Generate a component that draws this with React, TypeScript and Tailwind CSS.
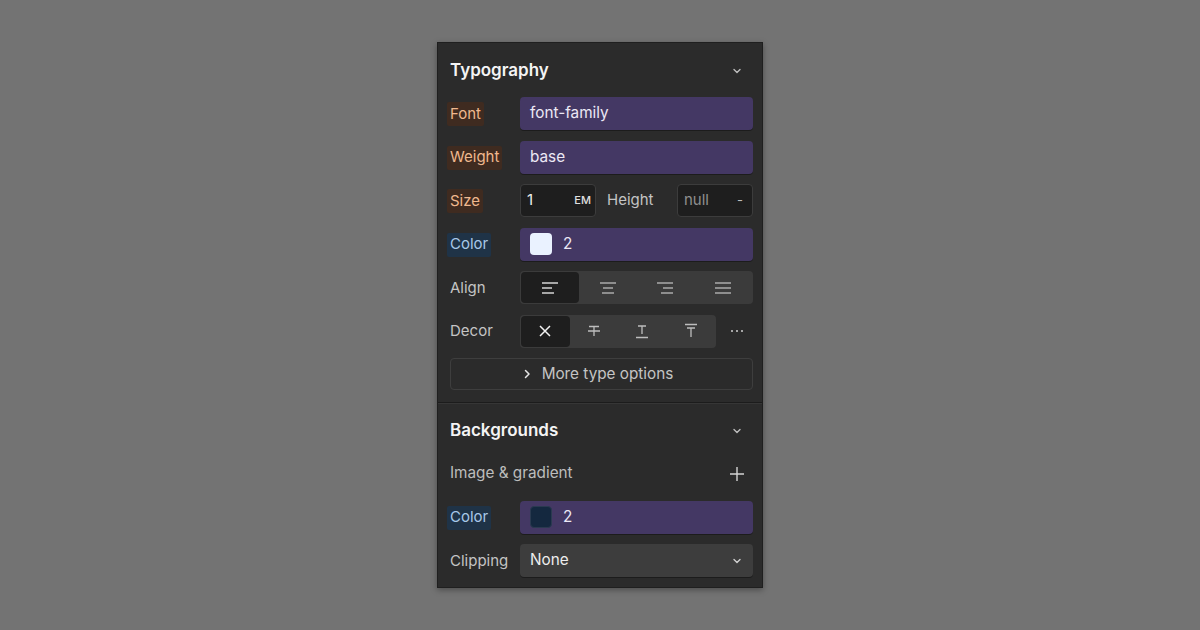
import React from "react";

const font = { fontFamily: "Inter, 'Noto Sans', sans-serif" };

function Chevron({ className = "" }: { className?: string }) {
  return (
    <svg width="12" height="12" viewBox="0 0 12 12" className={className} fill="none">
      <path d="M3 4.5 L6 7.5 L9 4.5" stroke="currentColor" strokeWidth="1.4" strokeLinecap="round" strokeLinejoin="round" />
    </svg>
  );
}

function Label({ children, tone }: { children: React.ReactNode; tone?: "orange" | "blue" }) {
  const cls =
    tone === "orange"
      ? "bg-[#3f2b20] text-[#f0b88e]"
      : tone === "blue"
      ? "bg-[#1f3347] text-[#a8c8e8]"
      : "text-[#c4c4c4]";
  return (
    <div className="w-[73px] shrink-0 -ml-[3px]">
      <span className={`inline-flex h-[24px] items-center rounded-[2px] px-[3px] text-[15px] ${cls}`}>{children}</span>
    </div>
  );
}

function Row({ children }: { children: React.ReactNode }) {
  return <div className="flex h-[33px] items-center">{children}</div>;
}

function PurpleInput({ children }: { children: React.ReactNode }) {
  return (
    <div className="flex h-[33px] flex-1 items-center gap-[11px] rounded-[4px] bg-[#443864] px-[10px] text-[15.3px] text-[#ece8f5] shadow-[0_1px_0_rgba(0,0,0,0.35)]">
      {children}
    </div>
  );
}

function AlignIcon({ kind }: { kind: "left" | "center" | "right" | "justify" }) {
  const lines: [number, number][] =
    kind === "left"
      ? [[1, 17], [1, 11], [1, 13]]
      : kind === "center"
      ? [[1, 17], [4, 14], [3, 15]]
      : kind === "right"
      ? [[1, 17], [7, 17], [5, 17]]
      : [[1, 17], [1, 17], [1, 17]];
  const ys = [3, 8, 13];
  return (
    <svg width="18" height="16" viewBox="0 0 18 16" fill="none">
      {lines.map(([a, b], i) => (
        <line key={i} x1={a} y1={ys[i]} x2={b} y2={ys[i]} stroke="currentColor" strokeWidth="1.3" />
      ))}
    </svg>
  );
}

function Seg({ active, children }: { active?: boolean; children: React.ReactNode }) {
  return (
    <div
      className={`flex flex-1 items-center justify-center rounded-[4px] ${
        active ? "bg-[#1e1e1e] text-[#f2f2f2]" : "text-[#bdbdbd]"
      }`}
    >
      {children}
    </div>
  );
}

export default function App() {
  return (
    <div className="flex h-[630px] w-[1200px] items-start justify-center bg-[#737373] pt-[42px]" style={font}>
      <div className="w-[326px] border border-[#1f1f1f] bg-[#2b2b2b] shadow-[0_2px_6px_rgba(0,0,0,0.35)]">
        {/* Typography */}
        <div className="flex flex-col gap-[10.5px] pb-[12px] pl-[12px] pr-[9px] pt-[14px]">
          <div className="mb-[1.5px] flex h-[28px] items-center justify-between">
            <span className="text-[17px] font-semibold text-[#f4f4f4]">Typography</span>
            <Chevron className="mr-[10px] text-[#bdbdbd]" />
          </div>
          <Row>
            <Label tone="orange">Font</Label>
            <PurpleInput>font-family</PurpleInput>
          </Row>
          <Row>
            <Label tone="orange">Weight</Label>
            <PurpleInput>base</PurpleInput>
          </Row>
          <Row>
            <Label tone="orange">Size</Label>
            <div className="flex h-[33px] w-[76px] items-center justify-between rounded-[4px] border border-[#3c3c3c] bg-[#1e1e1e] pl-[6px] pr-[4px]">
              <span className="text-[15px] text-[#ededed]">1</span>
              <span className="text-[11px] font-medium text-[#e0e0e0]">EM</span>
            </div>
            <span className="ml-[11px] text-[15px] text-[#c4c4c4]">Height</span>
            <div className="ml-auto flex h-[33px] w-[76px] items-center justify-between rounded-[4px] border border-[#3c3c3c] bg-[#1e1e1e] pl-[6px] pr-[9px]">
              <span className="text-[15px] text-[#8f8f8f]">null</span>
              <span className="text-[13px] text-[#bdbdbd]">-</span>
            </div>
          </Row>
          <Row>
            <Label tone="blue">Color</Label>
            <PurpleInput>
              <span className="h-[22px] w-[22px] rounded-[4px] bg-[#eaf2ff]" />
              <span>2</span>
            </PurpleInput>
          </Row>
          <Row>
            <Label>Align</Label>
            <div className="flex h-[33px] flex-1 rounded-[4px] bg-[#3b3b3b] p-[1px]">
              <Seg active>
                <AlignIcon kind="left" />
              </Seg>
              <Seg>
                <AlignIcon kind="center" />
              </Seg>
              <Seg>
                <AlignIcon kind="right" />
              </Seg>
              <Seg>
                <AlignIcon kind="justify" />
              </Seg>
            </div>
          </Row>
          <Row>
            <Label>Decor</Label>
            <div className="flex h-[33px] w-[196px] rounded-[4px] bg-[#3b3b3b] p-[1px]">
              <Seg active>
                <svg width="14" height="14" viewBox="0 0 14 14" fill="none">
                  <path d="M2 2 L12 12 M12 2 L2 12" stroke="currentColor" strokeWidth="1.5" />
                </svg>
              </Seg>
              <Seg>
                <svg width="16" height="16" viewBox="0 0 16 16" fill="none">
                  <path d="M3 3.5 H13 M8 3.5 V13 M2 8 H14" stroke="currentColor" strokeWidth="1.3" />
                </svg>
              </Seg>
              <Seg>
                <svg width="16" height="16" viewBox="0 0 16 16" fill="none">
                  <path d="M4 3 H12 M8 3 V11 M2 14.5 H14" stroke="currentColor" strokeWidth="1.3" />
                </svg>
              </Seg>
              <Seg>
                <svg width="16" height="16" viewBox="0 0 16 16" fill="none">
                  <path d="M2 1.5 H14 M4 5 H12 M8 5 V14" stroke="currentColor" strokeWidth="1.3" />
                </svg>
              </Seg>
            </div>
            <div className="ml-auto mr-[10px] flex gap-[3px]">
              <span className="h-[2px] w-[2px] rounded-full bg-[#cfcfcf]" />
              <span className="h-[2px] w-[2px] rounded-full bg-[#cfcfcf]" />
              <span className="h-[2px] w-[2px] rounded-full bg-[#cfcfcf]" />
            </div>
          </Row>
          <div className="flex h-[32px] items-center justify-center gap-[10px] rounded-[4px] border border-[#3e3e3e] pr-[8px] text-[15.3px] text-[#c4c4c4]">
            <svg width="10" height="10" viewBox="0 0 10 10" fill="none" className="text-[#e6e6e6]">
              <path d="M3.5 1.5 L7 5 L3.5 8.5" stroke="currentColor" strokeWidth="1.5" strokeLinecap="round" strokeLinejoin="round" />
            </svg>
            <span>More type options</span>
          </div>
        </div>
        <div className="h-px bg-[#1c1c1c] shadow-[0_1px_0_#363636]" />
        {/* Backgrounds */}
        <div className="flex flex-col gap-[10.5px] pb-[10px] pl-[12px] pr-[9px] pt-[14px]">
          <div className="mb-[1.5px] flex h-[28px] items-center justify-between">
            <span className="text-[17px] font-semibold text-[#f4f4f4]">Backgrounds</span>
            <Chevron className="mr-[10px] text-[#bdbdbd]" />
          </div>
          <Row>
            <span className="text-[15.3px] text-[#bdbdbd]">Image &amp; gradient</span>
            <svg width="16" height="16" viewBox="0 0 16 16" fill="none" className="ml-auto mr-[8px] text-[#d4d4d4]">
              <path d="M8 1 V15 M1 8 H15" stroke="currentColor" strokeWidth="1.4" />
            </svg>
          </Row>
          <Row>
            <Label tone="blue">Color</Label>
            <PurpleInput>
              <span className="h-[22px] w-[22px] rounded-[4px] border border-[#2a3a50] bg-[#14283f]" />
              <span>2</span>
            </PurpleInput>
          </Row>
          <Row>
            <Label>Clipping</Label>
            <div className="flex h-[33px] flex-1 items-center justify-between rounded-[4px] bg-[#3d3d3d] pl-[10px] pr-[10px] text-[15.3px] text-[#ededed] shadow-[0_1px_0_rgba(0,0,0,0.35)]">
              <span>None</span>
              <Chevron className="text-[#cfcfcf]" />
            </div>
          </Row>
        </div>
      </div>
    </div>
  );
}
